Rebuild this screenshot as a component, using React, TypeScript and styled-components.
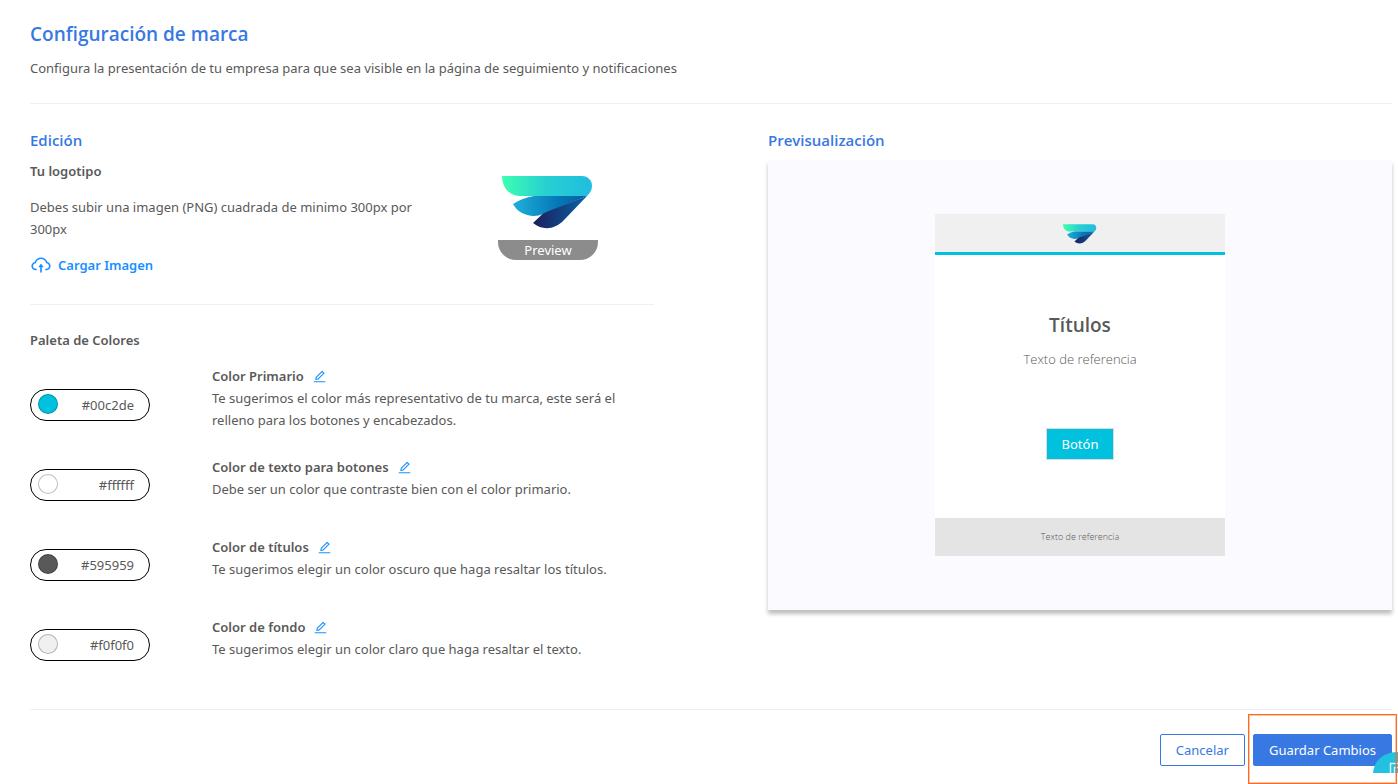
import React from "react";
import styled, { createGlobalStyle } from "styled-components";
import { AiOutlineCloudUpload, AiOutlineEdit } from "react-icons/ai";

const headingFont = `"Segoe UI", "Open Sans", sans-serif`;

const GlobalStyle = createGlobalStyle`
  *, *::before, *::after { box-sizing: border-box; }
  body {
    margin: 0;
    background: #fff;
    color: #595959;
    font-family: "Segoe UI", "Noto Sans", "Open Sans", sans-serif;
    font-size: 13px;
    line-height: 22px;
    overflow-x: hidden;
  }
  h1, h2, h3, p { margin: 0; }
  button { font: inherit; cursor: pointer; }
`;

const Page = styled.main`
  padding: 20px 6px 18px 30px;
`;

const PageTitle = styled.h1`
  color: #3778e3;
  font-family: ${headingFont};
  font-size: 19px;
  font-weight: 600;
  line-height: 28px;
`;

const Lead = styled.p`
  margin-top: 9px;
`;

const Divider = styled.hr<{ $before: number }>`
  height: 1px;
  border: 0;
  margin: ${(p) => p.$before}px 0 24px;
  background: #f0f0f0;
`;

const Columns = styled.div`
  display: grid;
  grid-template-columns: 1fr 1fr;
  column-gap: 114px;
  align-items: start;
`;

const SectionTitle = styled.h2`
  margin-bottom: 8px;
  color: #3778e3;
  font-family: ${headingFont};
  font-size: 15px;
  font-weight: 600;
  line-height: 24px;
`;

const Label = styled.h3`
  font-size: 13px;
  font-weight: 600;
`;

const LogoRow = styled.div`
  display: grid;
  grid-template-columns: 1fr 212px;
`;

const Hint = styled.p`
  margin: 14px 0;
`;

const UploadButton = styled.button`
  display: flex;
  align-items: center;
  gap: 6px;
  padding: 0;
  border: 0;
  background: none;
  color: #1890ff;
  font-weight: 600;
`;

const LogoFrame = styled.figure`
  display: flex;
  flex-direction: column;
  align-items: center;
  justify-content: space-between;
  width: 100px;
  height: 100px;
  margin: 0 auto;
  padding-top: 16px;
  border-radius: 0 0 18px 18px;
  overflow: hidden;
`;

const LogoCaption = styled.figcaption`
  width: 100%;
  background: #8c8c8c;
  color: #fff;
  line-height: 20px;
  text-align: center;
`;

const Palette = styled.ul`
  list-style: none;
  margin: 7px 0 0;
  padding: 0;
`;

const PaletteRow = styled.li`
  display: grid;
  grid-template-columns: 182px 1fr;
  align-items: center;
  min-height: 80px;
`;

const ColorPill = styled.button`
  display: flex;
  align-items: flex-start;
  justify-content: space-between;
  width: 120px;
  height: 32px;
  margin-top: 14px;
  padding: 4px 15px 0 7px;
  border: 1px solid #000;
  border-radius: 16px;
  background: #fff;
  color: #595959;
`;

const Swatch = styled.span<{ $color: string }>`
  width: 20px;
  height: 20px;
  border: 1px solid rgba(0, 0, 0, 0.25);
  border-radius: 50%;
  background: ${(p) => p.$color};
`;

const ColorName = styled.div`
  display: flex;
  align-items: center;
  gap: 8px;
`;

const EditButton = styled.button`
  display: flex;
  padding: 0;
  border: 0;
  background: none;
  color: #1890ff;
`;

const PreviewPanel = styled.div`
  display: flex;
  align-items: center;
  justify-content: center;
  min-height: 450px;
  background: #fafaff;
  box-shadow: 0 4px 4px rgba(0, 0, 0, 0.25);
`;

const MailCard = styled.article`
  display: flex;
  flex-direction: column;
  width: 290px;
  background: #fff;
  font-family: ${headingFont};
  text-align: center;
`;

const MailHeader = styled.header`
  display: flex;
  justify-content: center;
  padding: 10px 0 8px;
  background: #f0f0f0;
  border-bottom: 3px solid #00c2de;
`;

const MailBody = styled.div`
  display: flex;
  flex-direction: column;
  align-items: center;
  padding: 56px 0 58px;
`;

const MailTitle = styled.h3`
  font-size: 19px;
  font-weight: 600;
  line-height: 28px;
`;

const MailText = styled.p`
  margin: 9px 0 58px;
  font-weight: 300;
`;

const MailButton = styled.button`
  height: 32px;
  padding: 0 15px;
  border: 1px solid #d9d9d9;
  background: #00c2de;
  color: #fff;
  font-family: "Segoe UI", "Noto Sans", "Open Sans", sans-serif;
`;

const MailFooter = styled.footer`
  background: #e4e4e4;
  font-size: 9px;
  font-weight: 300;
  line-height: 38px;
`;

const Actions = styled.div`
  display: flex;
  justify-content: flex-end;
  gap: 8px;
`;

const ActionButton = styled.button<{ $primary?: boolean }>`
  height: 32px;
  padding: 0 15px;
  border: 1px solid #3778e3;
  border-radius: 2px;
  background: ${(p) => (p.$primary ? "#3778e3" : "#fff")};
  color: ${(p) => (p.$primary ? "#fff" : "#3778e3")};
`;

const Highlight = styled.div`
  position: relative;

  &::after {
    content: "";
    position: absolute;
    inset: -20px -5px -18px;
    border: 1px solid #ff6a1f;
    box-shadow: inset 0 0 0 1px rgba(255, 106, 31, 0.4);
    pointer-events: none;
  }
`;

const ChatBubble = styled.svg`
  position: absolute;
  right: -6px;
  bottom: -7px;
`;

function BrandLogo({ width, height, id }: { width: number; height: number; id: string }) {
  return (
    <svg width={width} height={height} viewBox="0 0 92 53" role="img" aria-label="Logotipo">
      <defs>
        <linearGradient id={`${id}-top`}>
          <stop offset="0" stopColor="#3dffb0" />
          <stop offset="0.5" stopColor="#27cfd2" />
          <stop offset="1" stopColor="#20bde0" />
        </linearGradient>
        <linearGradient id={`${id}-mid`}>
          <stop offset="0" stopColor="#1fb0da" />
          <stop offset="0.6" stopColor="#0578b8" />
          <stop offset="1" stopColor="#0a5c9e" />
        </linearGradient>
        <linearGradient id={`${id}-low`}>
          <stop offset="0" stopColor="#1c1f5c" />
          <stop offset="0.5" stopColor="#133f80" />
          <stop offset="1" stopColor="#0866a8" />
        </linearGradient>
      </defs>
      <path d="M0 0H80C86 0 90 4.500 90 10C90 14 88 17 85 20H18C8 20 0 12 0 0Z" fill={`url(#${id}-top)`} />
      <path d="M11 28Q20 22 32 20H85L41 38C30 43 16 38 11 28Z" fill={`url(#${id}-mid)`} />
      <path d="M31 47L41 37.500Q44 36 85 20L62 44C53 53.500 41 55 31 47Z" fill={`url(#${id}-low)`} />
    </svg>
  );
}

const colors = [
  {
    name: "Color Primario",
    value: "#00c2de",
    hint: "Te sugerimos el color más representativo de tu marca, este será el relleno para los botones y encabezados.",
  },
  {
    name: "Color de texto para botones",
    value: "#ffffff",
    hint: "Debe ser un color que contraste bien con el color primario.",
  },
  {
    name: "Color de títulos",
    value: "#595959",
    hint: "Te sugerimos elegir un color oscuro que haga resaltar los títulos.",
  },
  {
    name: "Color de fondo",
    value: "#f0f0f0",
    hint: "Te sugerimos elegir un color claro que haga resaltar el texto.",
  },
];

export default function App() {
  return (
    <>
      <GlobalStyle />
      <Page>
        <PageTitle>Configuración de marca</PageTitle>
        <Lead>
          Configura la presentación de tu empresa para que sea visible en la página de seguimiento y notificaciones
        </Lead>
        <Divider $before={24} />
        <Columns>
          <section>
            <SectionTitle>Edición</SectionTitle>
            <LogoRow>
              <div>
                <Label>Tu logotipo</Label>
                <Hint>Debes subir una imagen (PNG) cuadrada de minimo 300px por 300px</Hint>
                <UploadButton type="button">
                  <AiOutlineCloudUpload size={22} />
                  Cargar Imagen
                </UploadButton>
              </div>
              <LogoFrame>
                <BrandLogo width={92} height={53} id="logo" />
                <LogoCaption>Preview</LogoCaption>
              </LogoFrame>
            </LogoRow>
            <Divider $before={28} />
            <Label>Paleta de Colores</Label>
            <Palette>
              {colors.map((c) => (
                <PaletteRow key={c.name}>
                  <ColorPill type="button" aria-label={`${c.name}: ${c.value}`}>
                    <Swatch $color={c.value} />
                    {c.value}
                  </ColorPill>
                  <div>
                    <ColorName>
                      <Label>{c.name}</Label>
                      <EditButton type="button" aria-label={`Editar ${c.name}`}>
                        <AiOutlineEdit size={15} />
                      </EditButton>
                    </ColorName>
                    <p>{c.hint}</p>
                  </div>
                </PaletteRow>
              ))}
            </Palette>
          </section>
          <section>
            <SectionTitle>Previsualización</SectionTitle>
            <PreviewPanel>
              <MailCard>
                <MailHeader>
                  <BrandLogo width={34} height={20} id="mail-logo" />
                </MailHeader>
                <MailBody>
                  <MailTitle>Títulos</MailTitle>
                  <MailText>Texto de referencia</MailText>
                  <MailButton type="button">Botón</MailButton>
                </MailBody>
                <MailFooter>Texto de referencia</MailFooter>
              </MailCard>
            </PreviewPanel>
          </section>
        </Columns>
        <Divider $before={31} />
        <Actions>
          <ActionButton type="button">Cancelar</ActionButton>
          <Highlight>
            <ActionButton type="button" $primary>
              Guardar Cambios
            </ActionButton>
            <ChatBubble width="25" height="21" viewBox="0 0 25 21" aria-hidden="true">
              <path d="M0 21C1 9 10 0 25 0V21Z" fill="#22c1df" />
              <path d="M17.500 21V11.500H25M21.500 21V15.500H25" fill="none" stroke="#d5f4fa" strokeWidth="1.500" />
            </ChatBubble>
          </Highlight>
        </Actions>
      </Page>
    </>
  );
}
